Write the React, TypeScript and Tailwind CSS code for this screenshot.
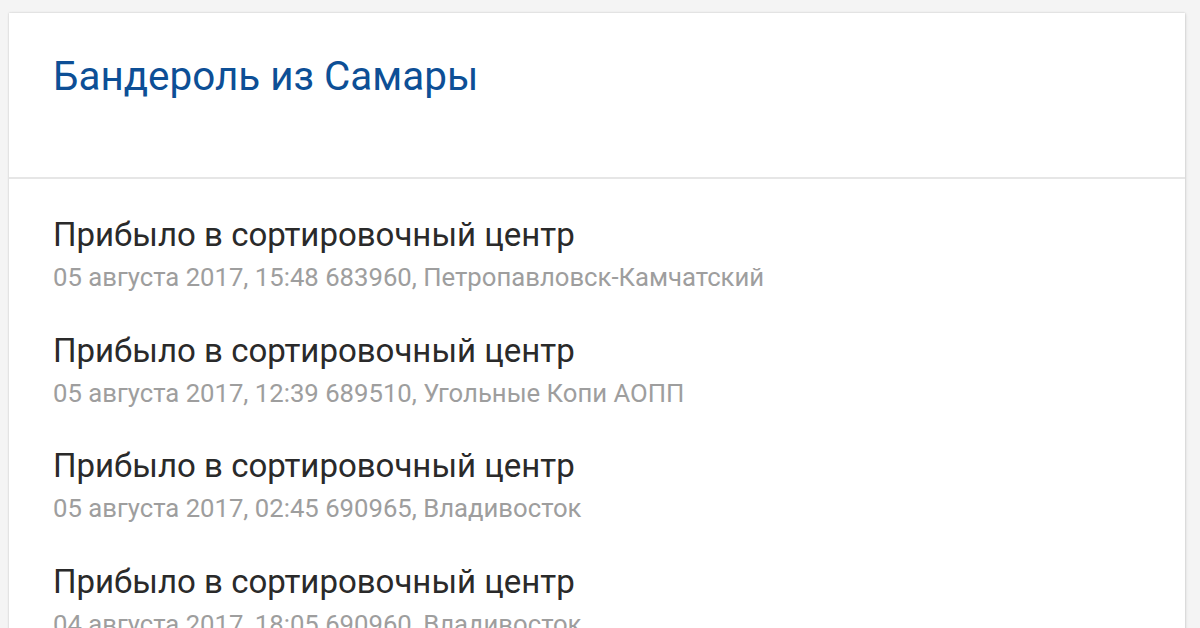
import React from "react";

const items = [
  { t: "Прибыло в сортировочный центр", s: "05 августа 2017, 15:48 683960, Петропавловск-Камчатский" },
  { t: "Прибыло в сортировочный центр", s: "05 августа 2017, 12:39 689510, Угольные Копи АОПП" },
  { t: "Прибыло в сортировочный центр", s: "05 августа 2017, 02:45 690965, Владивосток" },
  { t: "Прибыло в сортировочный центр", s: "04 августа 2017, 18:05 690960, Владивосток" },
];

export default function App() {
  return (
    <div
      className="w-[1200px] h-[628px] overflow-hidden bg-[#f4f4f4] pt-[13px] pl-[9px] pr-[15px]"
      style={{ fontFamily: "Roboto, 'Noto Sans', sans-serif" }}
    >
      <div className="bg-white shadow-[0_0_2px_rgba(0,0,0,0.18),1px_1px_3px_rgba(0,0,0,0.08)] min-h-[700px]">
        <div className="h-[166px] border-b-2 border-[#e6e6e6] px-[44px] pt-[40px]">
          <h1 className="text-[40.4px] leading-[48px] text-[#0d4f96] font-normal">Бандероль из Самары</h1>
        </div>
        <div className="px-[44px] pt-[34px] flex flex-col gap-[31.5px]">
          {items.map((it, i) => (
            <div key={i} className="flex flex-col">
              <div className="text-[33px] leading-[44px] text-[#2a2a2a]">{it.t}</div>
              <div className="text-[25.7px] leading-[40px] text-[#9e9e9e]">{it.s}</div>
            </div>
          ))}
        </div>
      </div>
    </div>
  );
}
